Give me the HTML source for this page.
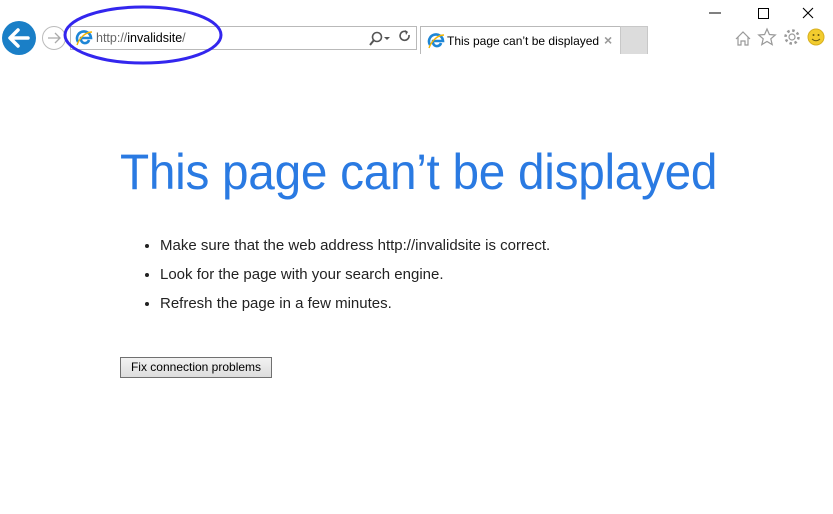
<!DOCTYPE html>
<html><head><meta charset="utf-8"><style>
body{margin:0;width:833px;height:514px;background:#fff;position:relative;overflow:hidden;font-family:"Liberation Sans",sans-serif}
.abs{position:absolute}
.addr{left:70px;top:26px;width:345px;height:22px;border:1px solid #b9b9b9;}
.tab{left:420px;top:26px;width:199px;height:27px;border:1px solid #b9b9b9;border-bottom:none;font-size:12px;color:#000}
.newtab{left:620px;top:26px;width:26px;height:27px;background:#dcdcdc;border:1px solid #c8c8c8;border-bottom:none}
h1{position:absolute;left:120px;top:143px;margin:0;font-weight:normal;font-size:50px;color:#2a7ae2;white-space:nowrap;letter-spacing:-0.3px;transform-origin:left top;transform:scaleX(0.955)}
ul{position:absolute;left:120px;top:234px;margin:0;padding:0 0 0 40px;font-size:15px;color:#222;}
li{height:29px;line-height:24px}
.btn{left:120px;top:357px;width:150px;height:19px;border:1px solid #707070;background:linear-gradient(#f2f2f2,#dddddd);font-size:12px;text-align:center;line-height:18px;color:#000}
</style></head><body>
<svg class="abs" style="left:0;top:0" width="833" height="70">
<circle cx="19" cy="38" r="17" fill="#1a7fc7"/>
<path d="M28 38H11M18 30l-8 8 8 8" stroke="#fff" stroke-width="3.5" fill="none" stroke-linecap="round" stroke-linejoin="round"/>
<circle cx="54" cy="38" r="11.5" fill="#fff" stroke="#bbb"/>
<path d="M48 38h11M55 33l5 5-5 5" stroke="#aaa" stroke-width="1.3" fill="none"/>
<circle cx="377" cy="37" r="4.5" fill="none" stroke="#555" stroke-width="1.6"/><path d="M374 40l-4 5" stroke="#555" stroke-width="2"/>
<path d="M384 37h6l-3 3z" fill="#555"/>
<path d="M409 35a4.5 4.5 0 1 1-2-3" stroke="#555" stroke-width="1.6" fill="none"/><path d="M405 30l3 2-2 3" fill="#555"/>
<path d="M709 13h12" stroke="#000"/>
<rect x="758.5" y="8.5" width="10" height="10" fill="none" stroke="#000"/>
<path d="M803 8l10 10M813 8l-10 10" stroke="#000" stroke-width="1.1"/>
<path d="M736 39l7-7 7 7M738 37v8h3v-4h4v4h3v-8" fill="none" stroke="#999" stroke-width="1.2"/>
<path d="M767 29l2.4 5.5 5.9.5-4.5 3.8 1.4 5.8-5.2-3.1-5.2 3.1 1.4-5.8-4.5-3.8 5.9-.5z" fill="none" stroke="#999" stroke-width="1.2"/>
<circle cx="792" cy="37" r="3" fill="none" stroke="#999" stroke-width="1.2"/>
<circle cx="792" cy="37" r="6.5" fill="none" stroke="#999" stroke-width="2.5" stroke-dasharray="2.5 2.6"/>
<circle cx="816" cy="37" r="8" fill="#f2cc2e" stroke="#d8b020"/>
<circle cx="813.5" cy="35" r="1" fill="#6a5a10"/><circle cx="818.5" cy="35" r="1" fill="#6a5a10"/>
<path d="M812 39q4 3.5 8 0" stroke="#6a5a10" fill="none"/>
</svg>
<div class="abs addr"></div>
<svg class="abs" style="left:75px;top:29px" width="18" height="18"><path d="M3 13a7 7 0 1 1 13-4H6a4 4 0 0 0 8 2" fill="none" stroke="#1e86d6" stroke-width="2.6"/><path d="M2 16c3-8 9-13 15-13" fill="none" stroke="#f3b400" stroke-width="1.4"/></svg>
<div class="abs" style="left:96px;top:31px;font-size:12.5px;color:#666">http://<span style="color:#000">invalidsite</span>/</div>
<div class="abs tab"><svg style="position:absolute;left:6px;top:5px" width="18" height="18"><path d="M3 13a7 7 0 1 1 13-4H6a4 4 0 0 0 8 2" fill="none" stroke="#1e86d6" stroke-width="2.6"/><path d="M2 16c3-8 9-13 15-13" fill="none" stroke="#f3b400" stroke-width="1.4"/></svg><span style="position:absolute;left:26px;top:7px">This page can’t be displayed</span><span style="position:absolute;left:183px;top:5px;color:#999;font-size:14px;font-weight:bold">×</span></div>
<div class="abs newtab"></div>
<svg class="abs" style="left:0;top:0" width="240" height="75"><ellipse cx="143" cy="35" rx="78" ry="28" fill="none" stroke="#3326ee" stroke-width="3"/></svg>
<h1>This page can’t be displayed</h1>
<ul><li>Make sure that the web address http://invalidsite is correct.</li><li>Look for the page with your search engine.</li><li>Refresh the page in a few minutes.</li></ul>
<div class="abs btn">Fix connection problems</div>
</body></html>
